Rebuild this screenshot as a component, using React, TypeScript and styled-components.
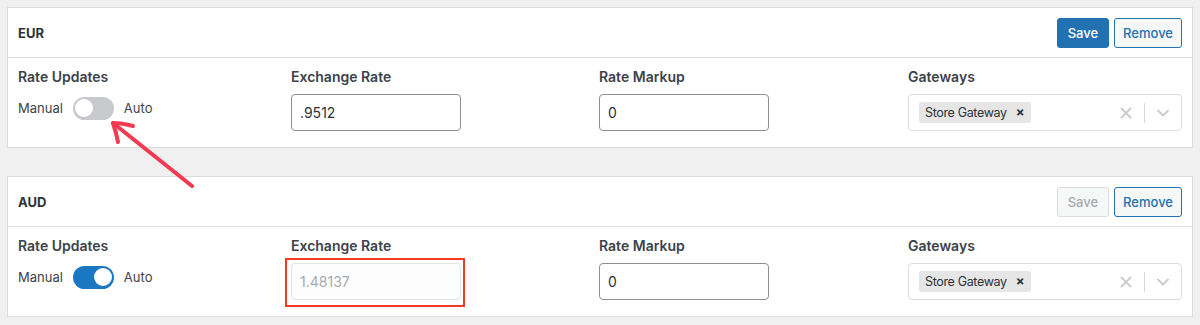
import React from "react";
import styled, { createGlobalStyle, css } from "styled-components";

const GlobalStyle = createGlobalStyle`
  html, body { margin: 0; padding: 0; background: #f0f0f1; }
  body {
    font-family: Inter, "Noto Sans", "Liberation Sans", sans-serif;
    color: #2c3338;
    -webkit-font-smoothing: antialiased;
  }
  * { box-sizing: border-box; }
`;

const Page = styled.div`
  position: relative;
  width: 1200px;
  height: 325px;
  padding: 7px 7px 0 7px;
  display: flex;
  flex-direction: column;
  gap: 28px;
  overflow: hidden;
`;

const Card = styled.section`
  background: #fff;
  border: 1px solid #dcdcde;
`;

const CardHeader = styled.div`
  height: 50px;
  padding: 0 10px;
  display: flex;
  align-items: center;
  justify-content: space-between;
  border-bottom: 1px solid #dcdcde;
`;

const Code = styled.h2`
  margin: 0;
  font-size: 13px;
  font-weight: 700;
  color: #2c3338;
`;

const Actions = styled.div`
  display: flex;
  gap: 5px;
`;

const Button = styled.button<{ $variant: "primary" | "secondary" | "disabled" }>`
  height: 30px;
  padding: 0 ${(p) => (p.$variant === "secondary" ? "8px" : "10px")};
  border-radius: 3px;
  font-family: inherit;
  font-size: 13px;
  font-weight: 500;
  border: 1px solid;
  cursor: pointer;
  ${(p) =>
    p.$variant === "primary"
      ? css`
          background: #2271b1;
          border-color: #2271b1;
          color: #fff;
        `
      : p.$variant === "secondary"
      ? css`
          background: #f6f7f7;
          border-color: #2271b1;
          color: #2271b1;
        `
      : css`
          background: #f6f7f7;
          border-color: #dcdcde;
          color: #a7aaad;
          cursor: default;
        `}
`;

const CardBody = styled.div`
  display: grid;
  grid-template-columns: 273px 308px 309px 1fr;
  padding: 9px 10px 16px 10px;
`;

const Field = styled.div`
  display: flex;
  flex-direction: column;
  gap: 7px;
`;

const Label = styled.label`
  font-size: 14px;
  line-height: 20px;
  font-weight: 600;
  color: #3c434a;
`;

const ToggleRow = styled.div`
  display: flex;
  align-items: center;
  gap: 10px;
  height: 28px;
  font-size: 13px;
  color: #3c434a;
`;

const Track = styled.span<{ $on: boolean }>`
  position: relative;
  width: 41px;
  height: 23px;
  border-radius: 12px;
  background: ${(p) => (p.$on ? "#1a78c2" : "#c8c9cc")};
`;

const Knob = styled.span<{ $on: boolean }>`
  position: absolute;
  top: 2.5px;
  left: ${(p) => (p.$on ? "21px" : "2.5px")};
  width: 18px;
  height: 18px;
  border-radius: 50%;
  background: #fff;
`;

const InputWrap = styled.div`
  position: relative;
  width: 170px;
`;

const TextInput = styled.input`
  width: 170px;
  height: 37px;
  padding: 0 8px;
  border: 1px solid #8c8f94;
  border-radius: 4px;
  font-family: inherit;
  font-size: 14px;
  color: #2c3338;
  background: #fff;
  outline: none;
  &:disabled {
    border-color: #e2e3e5;
    background: #fdfdfd;
    color: #a7aaad;
  }
`;

const Highlight = styled.span`
  position: absolute;
  top: -5px;
  left: -6px;
  right: -4px;
  bottom: -7px;
  border: 2px solid #f53a24;
  pointer-events: none;
`;

const Select = styled.div`
  height: 37px;
  border: 1px solid #dcdcde;
  border-radius: 4px;
  display: flex;
  align-items: center;
  padding: 0 0 0 10px;
`;

const Chips = styled.div`
  flex: 1;
  display: flex;
  align-items: center;
`;

const Chip = styled.span`
  display: inline-flex;
  align-items: center;
  gap: 9px;
  height: 21px;
  padding: 0 7px 0 6px;
  background: #e6e6e6;
  border-radius: 2px;
  font-size: 12.5px;
  letter-spacing: -0.35px;
  color: #2c3338;
`;

const ChipX = styled.span`
  font-size: 13px;
  font-weight: 700;
  color: #2c3338;
  line-height: 1;
`;

const Indicators = styled.div`
  display: flex;
  align-items: center;
  height: 100%;
`;

const IconBox = styled.span`
  width: 36px;
  display: flex;
  align-items: center;
  justify-content: center;
`;

const Separator = styled.span`
  width: 1px;
  height: 20px;
  background: #d6d6d6;
`;

const ArrowSvg = styled.svg`
  position: absolute;
  left: 0;
  top: 0;
  pointer-events: none;
`;

type Row = {
  code: string;
  saveEnabled: boolean;
  auto: boolean;
  rate: string;
  highlight?: boolean;
};

const rows: Row[] = [
  { code: "EUR", saveEnabled: true, auto: false, rate: ".9512" },
  { code: "AUD", saveEnabled: false, auto: true, rate: "1.48137", highlight: true },
];

const CurrencyCard: React.FC<{ row: Row }> = ({ row }) => (
  <Card>
    <CardHeader>
      <Code>{row.code}</Code>
      <Actions>
        <Button $variant={row.saveEnabled ? "primary" : "disabled"}>Save</Button>
        <Button $variant="secondary">Remove</Button>
      </Actions>
    </CardHeader>
    <CardBody>
      <Field>
        <Label>Rate Updates</Label>
        <ToggleRow>
          <span>Manual</span>
          <Track $on={row.auto}>
            <Knob $on={row.auto} />
          </Track>
          <span>Auto</span>
        </ToggleRow>
      </Field>
      <Field>
        <Label>Exchange Rate</Label>
        <InputWrap>
          <TextInput value={row.rate} disabled={row.auto} readOnly />
          {row.highlight && <Highlight />}
        </InputWrap>
      </Field>
      <Field>
        <Label>Rate Markup</Label>
        <InputWrap>
          <TextInput value="0" readOnly />
        </InputWrap>
      </Field>
      <Field>
        <Label>Gateways</Label>
        <Select>
          <Chips>
            <Chip>
              Store Gateway <ChipX>×</ChipX>
            </Chip>
          </Chips>
          <Indicators>
            <IconBox>
              <svg width="12" height="12" viewBox="0 0 12 12">
                <path d="M1.5 1.5 L10.5 10.5 M10.5 1.5 L1.5 10.5" stroke="#cccccc" strokeWidth="2" strokeLinecap="round" />
              </svg>
            </IconBox>
            <Separator />
            <IconBox>
              <svg width="12" height="8" viewBox="0 0 12 8">
                <path d="M1 1.5 L6 6.5 L11 1.5" stroke="#cccccc" strokeWidth="1.8" fill="none" strokeLinecap="round" strokeLinejoin="round" />
              </svg>
            </IconBox>
          </Indicators>
        </Select>
      </Field>
    </CardBody>
  </Card>
);

export default function App() {
  return (
    <>
      <GlobalStyle />
      <Page>
        {rows.map((r) => (
          <CurrencyCard key={r.code} row={r} />
        ))}
        <ArrowSvg width="1200" height="325" viewBox="0 0 1200 325">
          <g stroke="#f43a52" strokeWidth="4" strokeLinecap="round" strokeLinejoin="round" fill="none">
            <path d="M192 186 L113 123" />
            <path d="M133 126 Q122 123 113 123 Q116 132 118 142" />
          </g>
        </ArrowSvg>
      </Page>
    </>
  );
}
